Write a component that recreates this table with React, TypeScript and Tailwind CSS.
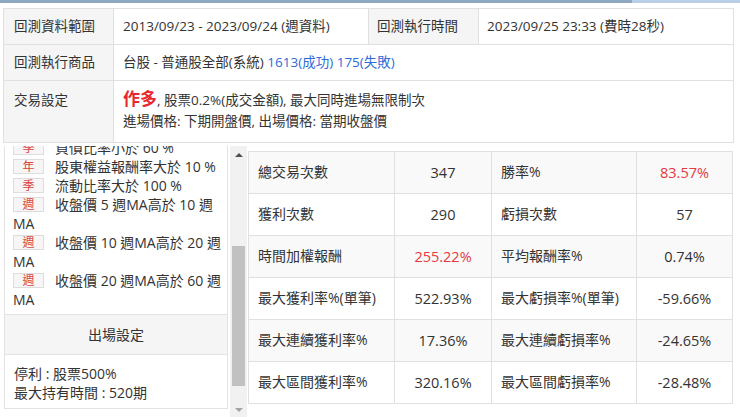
import React from "react";

const font = { fontFamily: '"Open Sans", "Noto Sans CJK TC", sans-serif' };

const rules = [
  { tag: "季", text: "負債比率小於 60 %", tail: "" },
  { tag: "年", text: "股東權益報酬率大於 10 %", tail: "" },
  { tag: "季", text: "流動比率大於 100 %", tail: "" },
  { tag: "週", text: "收盤價 5 週MA高於 10 週", tail: "MA" },
  { tag: "週", text: "收盤價 10 週MA高於 20 週", tail: "MA" },
  { tag: "週", text: "收盤價 20 週MA高於 60 週", tail: "MA" },
];

const stats = [
  ["總交易次數", "347", false, "勝率%", "83.57%", true],
  ["獲利次數", "290", false, "虧損次數", "57", false],
  ["時間加權報酬", "255.22%", true, "平均報酬率%", "0.74%", false],
  ["最大獲利率%(單筆)", "522.93%", false, "最大虧損率%(單筆)", "-59.66%", false],
  ["最大連續獲利率%", "17.36%", false, "最大連續虧損率%", "-24.65%", false],
  ["最大區間獲利率%", "320.16%", false, "最大區間虧損率%", "-28.48%", false],
] as const;

const Tag = ({ t }: { t: string }) => (
  <span className="inline-block w-[31px] h-[15px] mt-[2px] align-top text-center leading-[13px] border border-[#ddd] bg-[#f7f5f5] text-[12px] text-[#d9443f] mr-[11px]">
    {t}
  </span>
);

export default function App() {
  return (
    <div className="w-[740px] h-[417px] bg-white overflow-hidden text-[#333]" style={font}>
      <div className="flex h-[3px]">
        <div className="w-[632px] bg-[#8fa8c2]" />
        <div className="flex-1 bg-[#b9cfe6]" />
      </div>

      <table className="mt-[5px] ml-[3px] w-[731px] border-collapse text-[13.5px] table-fixed">
        <colgroup>
          <col className="w-[110px]" />
          <col className="w-[255px]" />
          <col className="w-[110px]" />
          <col />
        </colgroup>
        <tbody>
          <tr className="h-[36px]">
            <td className="border border-[#e0e0e0] bg-[#f5f5f5] pl-[10px]">回測資料範圍</td>
            <td className="border border-[#e0e0e0] pl-[9px]">2013/09/23 - 2023/09/24 (週資料)</td>
            <td className="border border-[#e0e0e0] bg-[#f5f5f5] pl-[8px]">回測執行時間</td>
            <td className="border border-[#e0e0e0] pl-[8px]">2023/09/25 23:33 (費時28秒)</td>
          </tr>
          <tr className="h-[36px]">
            <td className="border border-[#e0e0e0] bg-[#f5f5f5] pl-[10px]">回測執行商品</td>
            <td colSpan={3} className="border border-[#e0e0e0] pl-[9px]">
              台股 - 普通股全部(系統) <span className="text-[#2f6bd8]">1613(成功) 175(失敗)</span>
            </td>
          </tr>
          <tr className="h-[62px]">
            <td className="border border-[#e0e0e0] bg-[#f5f5f5] pl-[10px] align-top pt-[9px]">交易設定</td>
            <td colSpan={3} className="border border-[#e0e0e0] pl-[9px] align-top pt-[7px] leading-[22px]">
              <div>
                <span className="text-[17px] font-bold text-[#e8262b]">作多</span>, 股票0.2%(成交金額), 最大同時進場無限制次
              </div>
              <div className="-mt-[1px]">進場價格: 下期開盤價, 出場價格: 當期收盤價</div>
            </td>
          </tr>
        </tbody>
      </table>

      <div className="flex mt-[3px]">
        <div className="relative w-[247px] h-[272px] overflow-hidden flex">
          <div className="w-[230px] overflow-hidden">
            <div className="-mt-[8px] ml-[4px] w-[224px] border border-[#e3e3e3] border-t-0 text-[14px]">
              <div className="pl-[8px] pr-[4px] pb-[5px] leading-[19px]">
                {rules.map((r, i) => (
                  <div key={i}>
                    <div className="whitespace-nowrap">
                      <Tag t={r.tag} />
                      {r.text}
                    </div>
                    {r.tail && <div>{r.tail}</div>}
                  </div>
                ))}
              </div>
              <div className="h-[41px] flex items-center justify-center bg-[#f5f5f5] border-y border-[#e3e3e3]">
                出場設定
              </div>
              <div className="px-[9px] pt-[9px] pb-[6px] leading-[19px]">
                <div>停利 : 股票500%</div>
                <div>最大持有時間 : 520期</div>
              </div>
            </div>
          </div>
          <div className="w-[17px] h-full bg-[#f1f1f1] flex flex-col items-center">
            <div className="h-[17px] flex items-center justify-center">
              <div className="w-0 h-0 border-x-[4px] border-x-transparent border-b-[4px] border-b-[#505050]" />
            </div>
            <div className="flex-1 w-full px-[2px] pt-[83px] pb-[15px]">
              <div className="w-full h-full bg-[#c1c1c1]" />
            </div>
            <div className="h-[17px] flex items-center justify-center">
              <div className="w-0 h-0 border-x-[4px] border-x-transparent border-t-[4px] border-t-[#a3a3a3]" />
            </div>
          </div>
        </div>

        <table className="ml-[1px] mt-[5px] w-[485px] h-[253px] border-collapse table-fixed text-[14px] self-start">
          <colgroup>
            <col className="w-[146px]" />
            <col className="w-[97px]" />
            <col className="w-[145px]" />
            <col />
          </colgroup>
          <tbody>
            {stats.map((s, i) => (
              <tr key={i} className={i % 2 === 0 ? "bg-[#f9f9f9] h-[42px]" : "bg-white h-[42px]"}>
                <td className="border border-[#e0e0e0] pl-[9px] pb-[3px]">{s[0]}</td>
                <td className={"border border-[#e0e0e0] text-center text-[14.5px] " + (s[2] ? "text-[#e5393f]" : "")}>{s[1]}</td>
                <td className="border border-[#e0e0e0] pl-[9px] pb-[3px]">{s[3]}</td>
                <td className={"border border-[#e0e0e0] text-center text-[14.5px] " + (s[5] ? "text-[#e5393f]" : "")}>{s[4]}</td>
              </tr>
            ))}
          </tbody>
        </table>
      </div>
    </div>
  );
}
